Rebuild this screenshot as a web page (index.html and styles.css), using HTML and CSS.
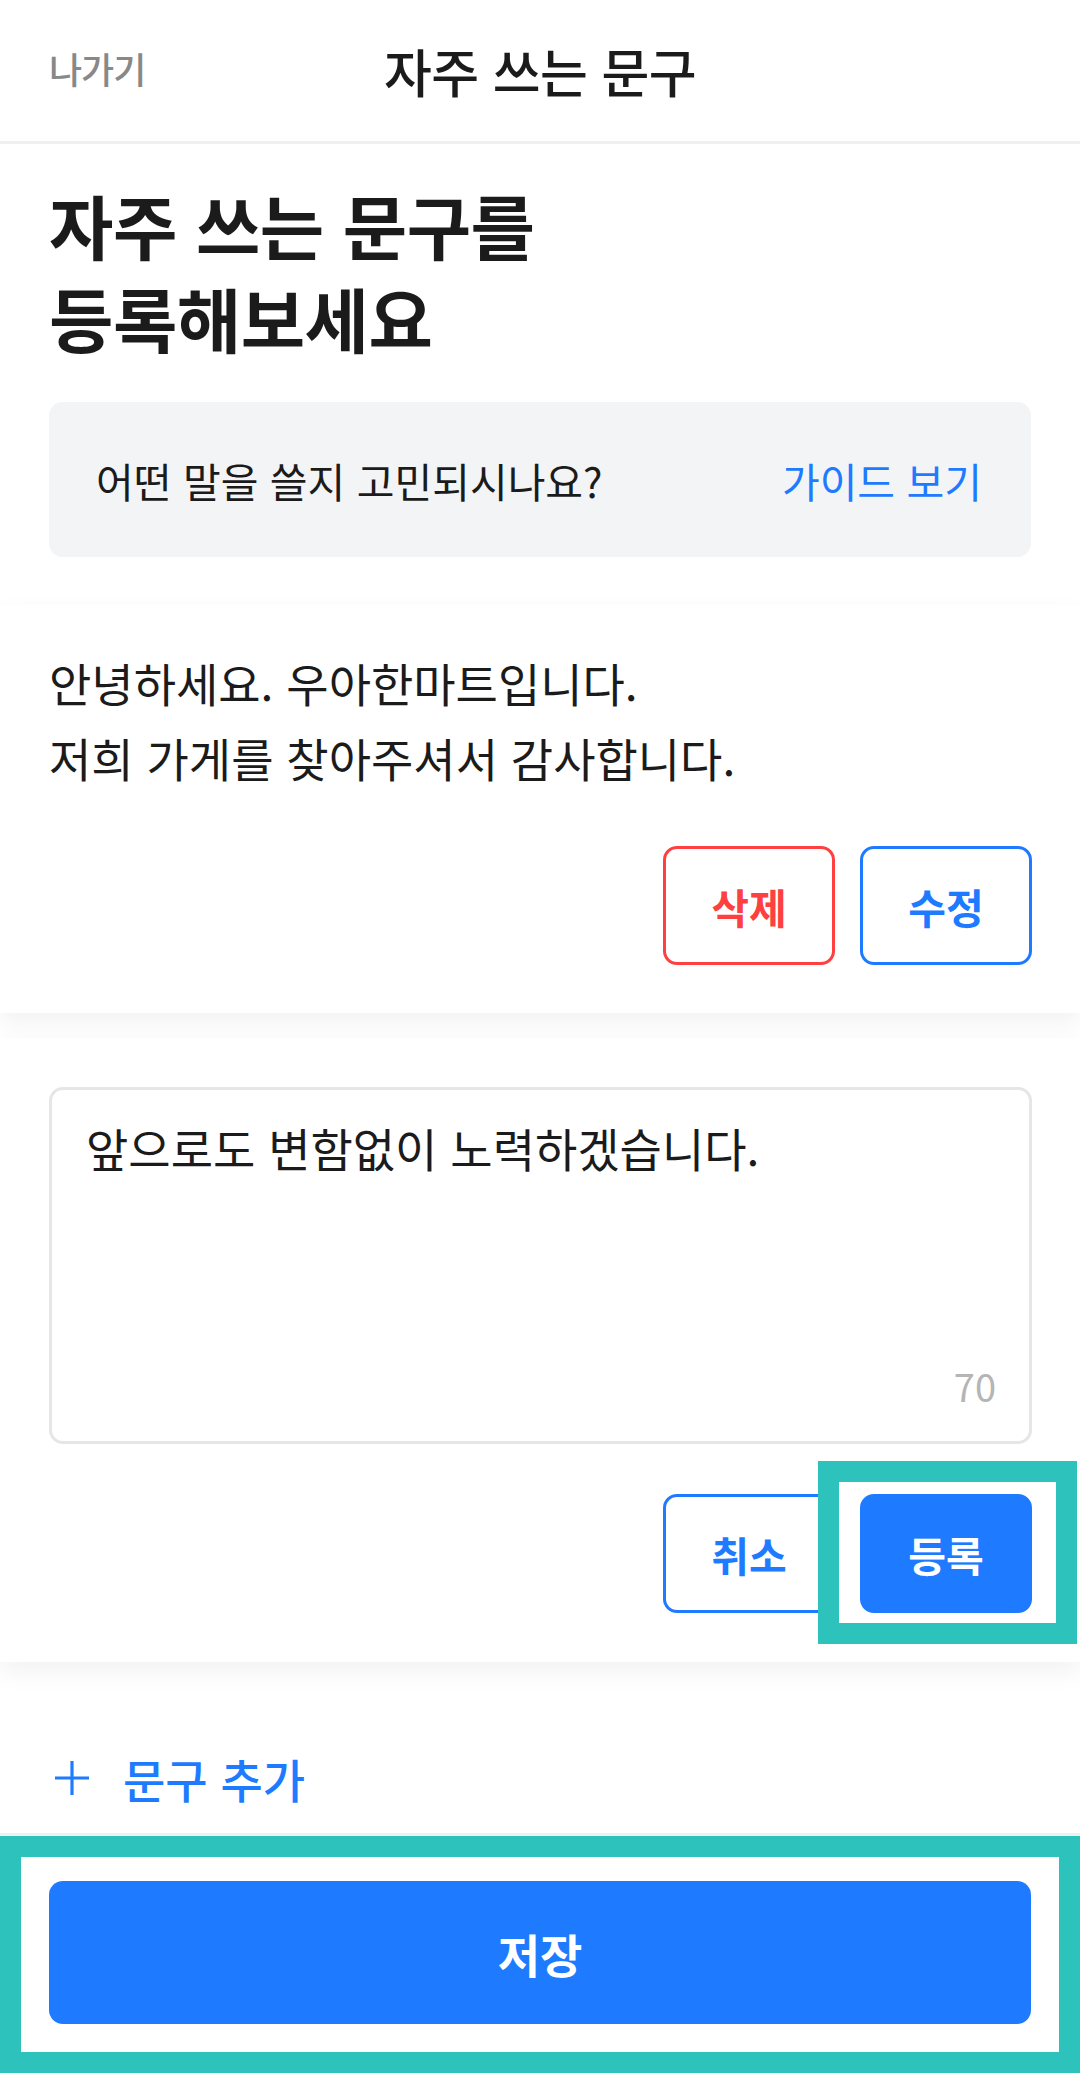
FILE: index.html
```html
<!DOCTYPE html>
<html lang="ko">
<head>
<meta charset="utf-8">
<title>자주 쓰는 문구</title>
<link rel="stylesheet" href="styles.css">
</head>
<body>
<header class="header">
  <span class="back">나가기</span>
  <span class="title">자주 쓰는 문구</span>
  <span></span>
</header>

<section class="intro">
  <h1 class="headline">자주 쓰는 문구를<br>등록해보세요</h1>
  <div class="guide">
    <span class="guide-text">어떤 말을 쓸지 고민되시나요?</span>
    <span class="guide-link">가이드 보기</span>
  </div>
</section>

<main class="cards">
  <article class="card">
    <p class="card-text">안녕하세요. 우아한마트입니다.<br>저희 가게를 찾아주셔서 감사합니다.</p>
    <div class="actions">
      <button class="btn btn-danger">삭제</button>
      <button class="btn btn-outline">수정</button>
    </div>
  </article>
  <article class="card card-edit">
    <div class="textarea">
      <span class="textarea-text">앞으로도 변함없이 노력하겠습니다.</span>
      <span class="count">70</span>
    </div>
    <div class="actions actions-edit">
      <button class="btn btn-outline">취소</button>
      <button class="btn btn-primary highlight highlight-btn">등록</button>
    </div>
  </article>
</main>

<div class="add-row">
  <svg class="plus" width="36" height="36" viewBox="0 0 36 36" aria-hidden="true">
    <path d="M18 1V35M1 18H35" stroke="#1e7bff" stroke-width="3.2" fill="none"/>
  </svg>
  <span class="add-text">문구 추가</span>
</div>

<footer class="bottom-bar highlight">
  <button class="save">저장</button>
</footer>
</body>
</html>
```

FILE: styles.css
```css
html, body {
  margin: 0;
  padding: 0;
  background: #ffffff;
}

body {
  width: 1080px;
  font-family: "Noto Sans CJK KR", "Noto Sans", sans-serif;
  color: #1b1b1b;
}

.header {
  height: 141px;
  border-bottom: 3px solid #f0f0f0;
  display: grid;
  grid-template-columns: 1fr auto 1fr;
  align-items: center;
}

.back {
  padding-left: 49px;
  font-size: 36px;
  font-weight: 500;
  color: #888888;
  letter-spacing: -1px;
  padding-bottom: 6px;
}

.title {
  font-size: 52px;
  font-weight: 500;
  letter-spacing: -0.5px;
  color: #1b1b1b;
}

.intro {
  padding: 34px 49px 0;
}

.headline {
  margin: 0;
  font-size: 70px;
  line-height: 93px;
  font-weight: 700;
  letter-spacing: -0.5px;
  color: #1b1b1b;
}

.guide {
  margin-top: 38px;
  height: 155px;
  box-sizing: border-box;
  background: #f3f4f6;
  border-radius: 14px;
  display: flex;
  justify-content: space-between;
  align-items: center;
  padding: 0 49px 0 47px;
  font-size: 41px;
}

.guide-text {
  color: #1b1b1b;
}

.guide-link {
  color: #1e7bff;
}

.cards {
  margin-top: 48px;
  display: flex;
  flex-direction: column;
  gap: 25px;
}

.card {
  background: #ffffff;
  box-shadow: 0 10px 24px rgba(0, 0, 0, 0.055);
  padding: 40px 48px 48px 49px;
}

.card-edit {
  padding-top: 49px;
  padding-bottom: 49px;
}

.card-text {
  margin: 0;
  font-size: 46px;
  line-height: 75px;
  color: #1b1b1b;
}

.actions {
  display: flex;
  justify-content: flex-end;
  gap: 25px;
  margin-top: 51px;
}

.actions-edit {
  margin-top: 50px;
}

.btn {
  width: 172px;
  height: 119px;
  box-sizing: border-box;
  border: 3px solid #1e7bff;
  border-radius: 14px;
  background: #ffffff;
  font-family: inherit;
  font-size: 41px;
  font-weight: 700;
  display: flex;
  align-items: center;
  justify-content: center;
  padding: 0;
}

.btn-danger {
  color: #ff4040;
  border-color: #ff4040;
}

.btn-outline {
  color: #1e7bff;
  border-color: #1e7bff;
}

.btn-primary {
  background: #1e7bff;
  color: #ffffff;
}

.textarea {
  height: 357px;
  box-sizing: border-box;
  border: 3px solid #e6e6e6;
  border-radius: 14px;
  padding: 25px 33px 33px 34px;
  display: flex;
  flex-direction: column;
  justify-content: space-between;
}

.textarea-text {
  font-size: 46px;
  line-height: 64px;
  color: #1b1b1b;
}

.count {
  align-self: flex-end;
  font-size: 38px;
  line-height: 44px;
  color: #b5b5b5;
}

.add-row {
  height: 171px;
  box-sizing: border-box;
  padding: 86px 0 25px 54px;
  display: flex;
  align-items: center;
  gap: 33px;
}

.plus {
  display: block;
  flex: none;
}

.add-text {
  font-size: 46px;
  line-height: 60px;
  font-weight: 500;
  color: #1e7bff;
}

.bottom-bar {
  border-top: 3px solid #f0f0f0;
  padding: 45px 49px 49px;
  background: #ffffff;
}

.save {
  display: flex;
  align-items: center;
  justify-content: center;
  width: 100%;
  height: 143px;
  border: none;
  border-radius: 14px;
  background: #1e7bff;
  color: #ffffff;
  font-family: inherit;
  font-size: 46px;
  font-weight: 700;
}

.highlight {
  position: relative;
}

.highlight::after {
  content: "";
  position: absolute;
  inset: 0;
  border: 21px solid #2dc3bc;
  pointer-events: none;
}

.highlight-btn::after {
  top: -36px;
  bottom: -34px;
  left: -45px;
  right: -48px;
}
```
